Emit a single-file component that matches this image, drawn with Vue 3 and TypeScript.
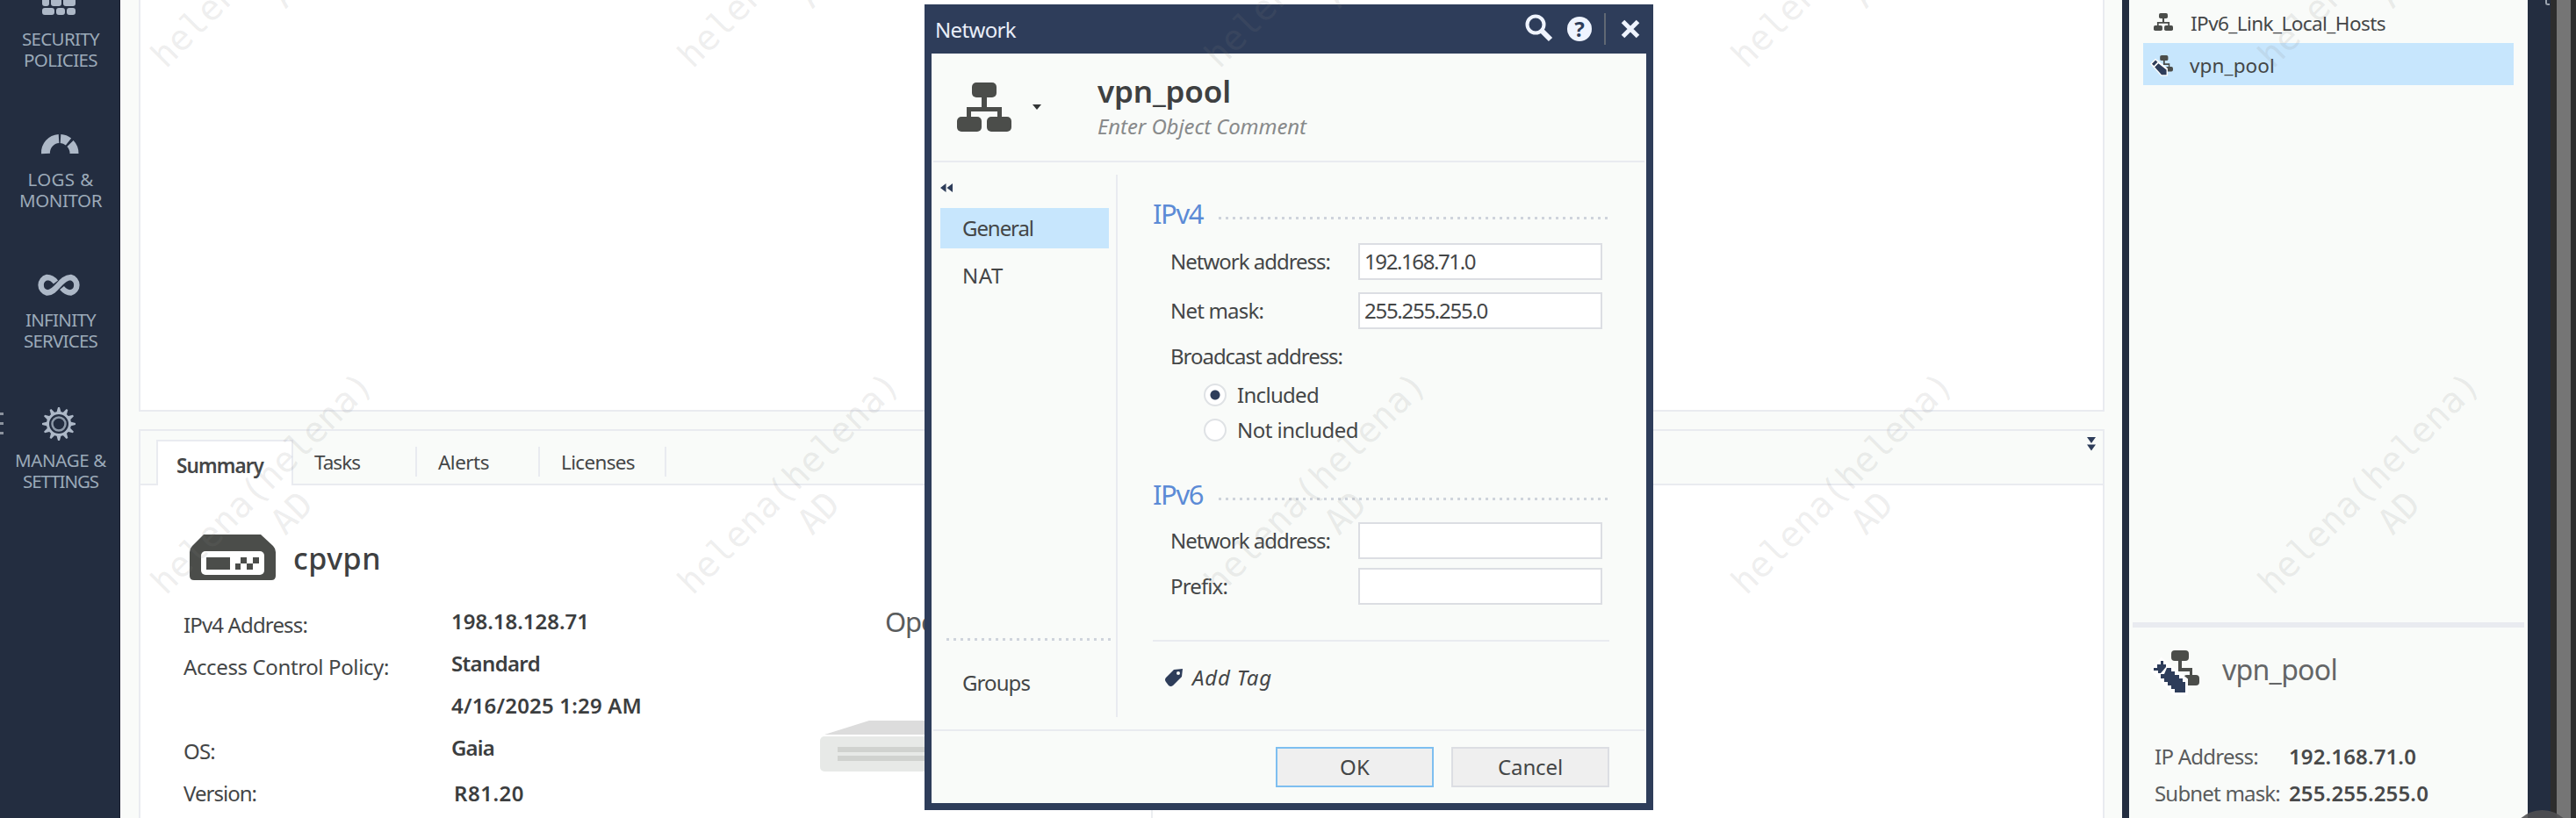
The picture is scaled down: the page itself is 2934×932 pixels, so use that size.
<script setup lang="ts">
import { reactive, ref } from 'vue'
import type { Directive } from 'vue'

interface NavItem { icon: string; lines: { text: string; width: number }[] }
interface Detail { label: string; labelWidth: number; value: string; valueWidth: number; aligned?: boolean }

// Spreads the letters of a label so that it takes up the given width in pixels.
const vFit: Directive<HTMLElement, number> = {
  mounted(el, binding) {
    const chars = (el.textContent ?? '').trim().length
    const natural = el.getBoundingClientRect().width
    if (chars > 0) el.style.letterSpacing = `${(binding.value - natural) / chars}px`
  },
}

const navItems: NavItem[] = [
  { icon: 'wall', lines: [{ text: 'SECURITY', width: 88 }, { text: 'POLICIES', width: 84 }] },
  { icon: 'gauge', lines: [{ text: 'LOGS &', width: 75 }, { text: 'MONITOR', width: 94 }] },
  { icon: 'infinity', lines: [{ text: 'INFINITY', width: 80 }, { text: 'SERVICES', width: 84 }] },
  { icon: 'gear', lines: [{ text: 'MANAGE &', width: 104 }, { text: 'SETTINGS', width: 86 }] },
]

const details: Detail[] = [
  { label: 'IPv4 Address:', labelWidth: 141, value: '198.18.128.71', valueWidth: 157 },
  { label: 'Access Control Policy:', labelWidth: 234, value: 'Standard', valueWidth: 101 },
  { label: '', labelWidth: 0, value: '4/16/2025 1:29 AM', valueWidth: 217 },
  { label: 'OS:', labelWidth: 36, value: 'Gaia', valueWidth: 49 },
  { label: 'Version:', labelWidth: 83, value: 'R81.20', valueWidth: 80, aligned: true },
]

const teeth = Array.from({ length: 12 }, (_, i) => i * 30)
const marks = [0, 1].flatMap((row) =>
  [0, 1, 2, 3, 4].map((col) => ({ x: 308 + col * 600, y: -40 + row * 600 })),
)

const form = reactive({ address4: '192.168.71.0', mask: '255.255.255.0', address6: '', prefix: '' })
const broadcast = ref<'in' | 'out'>('in')
</script>

<template>
  <div class="screen">
    <nav class="sidebar">
      <div v-for="item in navItems" :key="item.icon" class="nav-item">
        <svg v-if="item.icon === 'wall'" class="nav-icon" viewBox="0 0 48 40">
          <rect x="5" y="0" width="8" height="15" rx="3" /><rect x="15" y="0" width="12" height="15" rx="3" /><rect x="29" y="0" width="14" height="15" rx="3" />
          <rect x="5" y="17" width="14" height="8" rx="3" /><rect x="21" y="17" width="10" height="8" rx="3" /><rect x="33" y="17" width="10" height="8" rx="3" />
        </svg>
        <svg v-else-if="item.icon === 'gauge'" class="nav-icon" viewBox="0 0 48 40">
          <path d="M9 23 A16 16 0 0 1 24 6" class="arc" />
          <path d="M26 6 A16 16 0 0 1 35 9.500" class="arc" />
          <path d="M37 11.500 A16 16 0 0 1 41.500 23" class="arc" />
        </svg>
        <svg v-else-if="item.icon === 'infinity'" class="nav-icon" viewBox="0 0 48 40">
          <path d="M20.500 9.500 C17 5 13 4 10.500 4 A9 9 0 0 0 10.500 21.500 C21 22 26 4 37.500 4 A9 9 0 0 1 37.500 21.500 C34 21.500 30.500 19.500 27.500 16" class="loop" />
        </svg>
        <svg v-else class="nav-icon" viewBox="0 0 48 40">
          <g transform="translate(24 11)">
            <path v-for="a in teeth" :key="a" d="M-2.600 -13 L-1 -19 H1 L2.600 -13 Z" :transform="`rotate(${a})`" />
            <circle r="12.500" class="ring" /><circle r="7.500" class="ring thin" />
          </g>
        </svg>
        <div v-for="line in item.lines" :key="line.text" class="nav-line"><span v-fit="line.width">{{ line.text }}</span></div>
      </div>
      <div class="handle"><i></i><i></i><i></i></div>
    </nav>

    <main class="main">
      <section class="panel upper"></section>
      <section class="panel lower">
        <div class="tabs">
          <div class="tab active"><span v-fit="99">Summary</span></div>
          <div class="tab tasks"><span v-fit="52">Tasks</span></div>
          <div class="tab alerts"><span v-fit="58">Alerts</span></div>
          <div class="tab licenses"><span v-fit="84">Licenses</span></div>
          <svg class="fold" viewBox="0 0 12 16"><path d="M1 0 H11 L6 7 Z M1 8.500 H11 L6 15.500 Z" /></svg>
        </div>
        <div class="summary">
          <div class="facts">
            <div class="machine">
              <svg class="appliance" viewBox="0 0 98 52">
                <path d="M16 0 H81 L95 13 Q98 16 98 20 V47 Q98 52 93 52 H5 Q0 52 0 47 V20 Q0 16 3 13 Z" class="ink" />
                <rect x="13" y="19" width="72" height="27" rx="5" fill="#fff" />
                <path d="M19 26 H46 V40 H19 Z M58 26 H65 V33 H58 Z M72 26 H79 V33 H72 Z M52 33 H58 V40 H52 Z M65 33 H72 V40 H65 Z" class="ink" />
              </svg>
              <span v-fit="100" class="machine-name">cpvpn</span>
            </div>
            <div class="detail-grid">
              <template v-for="row in details" :key="row.value">
                <div class="label"><span v-if="row.label" v-fit="row.labelWidth">{{ row.label }}</span></div>
                <div class="value" :class="{ aligned: row.aligned }"><span v-fit="row.valueWidth">{{ row.value }}</span></div>
              </template>
            </div>
          </div>
          <div class="hardware">
            <span class="hardware-name">Open Server</span>
            <svg class="server" viewBox="0 0 300 58">
              <path d="M5 16 L56 0 H244 L295 16 Z" fill="#dcdcdc" />
              <rect y="18" width="300" height="40" rx="5" fill="#e7e9e7" />
              <path d="M20 30 H280 V36 H20 Z M20 40 H280 V46 H20 Z" fill="#d0d2cf" />
            </svg>
          </div>
        </div>
      </section>
    </main>

    <aside class="objects">
      <div class="object-list">
        <div class="object">
          <svg class="net-small" viewBox="0 0 62 56">
            <rect x="17" width="28" height="17" rx="5" /><rect y="39" width="28" height="17" rx="5" /><rect x="34" y="39" width="28" height="17" rx="5" />
            <path d="M28 16 H34 V28 H51 V40 H46 V33 H16 V40 H11 V28 H28 Z" />
          </svg>
          <span v-fit="222">IPv6_Link_Local_Hosts</span>
        </div>
        <div class="object selected">
          <svg class="edit-small" viewBox="0 0 58 52">
            <rect x="24" width="20" height="13" rx="4" class="ink" /><rect x="38" y="28" width="18" height="12" rx="4" class="ink" />
            <path d="M32 12 H36 V20 H48 V29 H45 V24 H32 Z" class="ink" />
            <path d="M13 12 L40 34 V48 H28 L4 21 Z" class="halo" />
            <path d="M13 12 L18 17 L9 26 L4 21 Z M20 20 L40 36 V48 H28 L11 29 Z" class="pencil" />
          </svg>
          <span v-fit="97">vpn_pool</span>
        </div>
      </div>
      <div class="preview">
        <div class="preview-head">
          <svg class="edit-large" viewBox="0 0 58 52">
            <rect x="24" width="20" height="12" rx="4" class="ink" /><rect x="38" y="28" width="18" height="12" rx="4" class="ink" />
            <path d="M32 12 H36 V20 H48 V29 H45 V24 H32 Z" class="ink" />
            <path d="M13 12 L40 34 V48 H28 L4 23 Z" class="halo" />
            <path d="M12 12 H15 V16 H18 V19 L12 26 H9 V23 H4 V20 H8 V16 H12 Z M19 20 H24 V24 H28 V28 H33 V32 H37 V36 H40 V48 H28 V44 H24 V40 H20 V36 H16 V32 H12 V27 H16 Z" class="pencil" />
          </svg>
          <span v-fit="131" class="preview-name">vpn_pool</span>
        </div>
        <div class="preview-row"><div class="key"><span v-fit="118">IP Address:</span></div><b v-fit="145">192.168.71.0</b></div>
        <div class="preview-row"><div class="key"><span v-fit="143">Subnet mask:</span></div><b v-fit="159">255.255.255.0</b></div>
      </div>
    </aside>
    <div class="edge"><i></i></div>
    <div class="scroll"></div>
    <div class="bubble"></div>

    <div class="dialog">
      <header class="title">
        <span v-fit="92">Network</span>
        <svg class="tool search" viewBox="0 0 32 34"><circle cx="12" cy="12" r="9.500" /><path d="M19 19 L29 29" /></svg>
        <div class="help">?</div>
        <div class="bar"></div>
        <svg class="tool close" viewBox="0 0 22 22"><path d="M2.500 2.500 L19.500 19.500 M19.500 2.500 L2.500 19.500" /></svg>
      </header>
      <div class="head">
        <svg class="net-large" viewBox="0 0 62 56">
          <rect x="17" width="28" height="17" rx="5" /><rect y="39" width="28" height="17" rx="5" /><rect x="34" y="39" width="28" height="17" rx="5" />
          <path d="M28 16 H34 V28 H51 V40 H46 V33 H16 V40 H11 V28 H28 Z" />
        </svg>
        <div class="caret"></div>
        <div class="naming">
          <div class="object-name"><span v-fit="152">vpn_pool</span></div>
          <div class="comment"><span v-fit="238">Enter Object Comment</span></div>
        </div>
      </div>
      <div class="body">
        <div class="pages">
          <svg class="collapse" viewBox="0 0 14 10"><path d="M6.500 0 V10 L0 5 Z M14 0 V10 L7.500 5 Z" /></svg>
          <div class="page current"><span v-fit="81">General</span></div>
          <div class="page nat"><span v-fit="47">NAT</span></div>
          <div class="dots groups-line"></div>
          <div class="page"><span v-fit="77">Groups</span></div>
        </div>
        <div class="form">
          <div class="heading"><span v-fit="57">IPv4</span><div class="dots"></div></div>
          <div class="field first"><label><span v-fit="182">Network address:</span></label><div class="input"><span v-fit="126">{{ form.address4 }}</span></div></div>
          <div class="field second"><label><span v-fit="106">Net mask:</span></label><div class="input"><span v-fit="140">{{ form.mask }}</span></div></div>
          <div class="caption"><span v-fit="196">Broadcast address:</span></div>
          <div class="radio" @click="broadcast = 'in'"><i :class="{ on: broadcast === 'in' }"></i><span v-fit="93">Included</span></div>
          <div class="radio" @click="broadcast = 'out'"><i :class="{ on: broadcast === 'out' }"></i><span v-fit="138">Not included</span></div>
          <div class="heading v6"><span v-fit="57">IPv6</span><div class="dots"></div></div>
          <div class="field third"><label><span v-fit="182">Network address:</span></label><div class="input">{{ form.address6 }}</div></div>
          <div class="field fourth"><label><span v-fit="65">Prefix:</span></label><div class="input">{{ form.prefix }}</div></div>
          <div class="rule"></div>
          <div class="tag">
            <svg viewBox="0 0 22 22"><path d="M21 1 L20 10 L10 20 Q7.500 22 5 20 L2 16 Q0 13.500 2 11 L11 2 Z" /><circle cx="16" cy="6" r="2" /></svg>
            <span v-fit="91">Add Tag</span>
          </div>
        </div>
      </div>
      <footer class="actions">
        <button class="ok"><span v-fit="34">OK</span></button>
        <button><span v-fit="74">Cancel</span></button>
      </footer>
    </div>

    <svg class="watermark" viewBox="0 0 2934 932">
      <g v-for="m in marks" :key="`${m.x}-${m.y}`" :transform="`translate(${m.x} ${m.y}) rotate(-45)`">
        <text text-anchor="middle">helena(helena)</text>
        <text y="48" text-anchor="middle">AD</text>
      </g>
    </svg>
  </div>
</template>

<style>
html, body { margin: 0; background: #f9fbf9; overflow: hidden; }
</style>

<style scoped>
.screen { position: relative; display: flex; width: 2934px; height: 932px; overflow: hidden; background: #f9fbf9; color: #444647; font: 24px "Noto Sans", "Open Sans", sans-serif; }
.screen * { box-sizing: border-box; }
span, b { display: inline-block; white-space: nowrap; }
svg { display: block; flex: none; overflow: visible; }
.ink { fill: #4b4d4a; }

.sidebar { position: relative; flex: none; width: 137px; background: #232d40; border-right: 1px solid #171c2c; overflow: hidden; }
.nav-item { height: 160px; padding-left: 2px; color: #9caab9; font-size: 20.500px; line-height: 24px; text-align: center; }
.nav-item:first-child { margin-top: -8px; }
.nav-icon { width: 48px; height: 40px; margin: 0 0 1px 41px; fill: #adb8c7; }
.nav-line:nth-of-type(1) { margin-top: -1px; }
.nav-icon .arc { fill: none; stroke: #adb8c7; stroke-width: 10; }
.nav-icon .loop { fill: none; stroke: #adb8c7; stroke-width: 6.500; }
.nav-icon .ring { fill: none; stroke: #adb8c7; stroke-width: 3; }
.nav-icon .thin { stroke: #8d99a8; stroke-width: 2.500; }
.handle { position: absolute; left: 0; top: 470px; display: flex; flex-direction: column; gap: 8px; }
.handle i { width: 4px; height: 3px; background: #8b929d; }

.main { flex: none; display: flex; flex-direction: column; gap: 20px; width: 2280px; padding: 0 20px; border-left: 1px solid #fff; }
.panel { flex: none; border: 2px solid #e9ebf0; background: #fff; }
.upper { height: 469px; border-top: 0; }
.lower { height: 460px; }
.tabs { display: flex; height: 62px; border-bottom: 2px solid #e9ebf0; background: #f9fbf9; font-size: 22.500px; line-height: 30px; }
.tab { height: 34px; margin-top: 18px; padding-top: 3px; border-right: 2px solid #e9ebf0; }
.tab.active { width: 156px; height: 52px; margin: 10px 0 0 18px; padding: 13px 0 0 21px; border: 2px solid #e9ebf0; border-bottom: 0; background: #fff; font-weight: 600; }
.tasks { width: 141px; padding-left: 24px; }
.alerts { width: 140px; padding-left: 24px; }
.licenses { width: 144px; padding-left: 24px; }
.fold { width: 12px; height: 16px; margin: 7px 7px 0 auto; fill: #2e3d5a; }
.summary { display: flex; height: 395px; }
.facts { flex: none; width: 774px; }
.machine { display: flex; height: 108px; padding: 56px 0 0 56px; }
.appliance { width: 98px; height: 52px; margin-right: 20px; }
.machine-name { margin-top: 7px; font-size: 34px; line-height: 40px; color: #3e4041; font-weight: 500; }
.detail-grid { display: grid; grid-template-columns: 305px 1fr; grid-auto-rows: 48px; margin: 27px 0 0 49px; font-size: 24px; line-height: 48px; }
.value { margin-top: -4px; color: #3c3e3f; font-weight: 600; }
.value.aligned { margin-top: 0; padding-left: 3px; }
.hardware { flex: none; width: 379px; padding-top: 135px; border-right: 2px solid #eceef1; }
.hardware-name { margin-left: 74px; font-size: 31px; line-height: 40px; color: #5a5c5d; letter-spacing: -1.200px; }
.server { width: 300px; height: 58px; margin-top: 93px; }

.objects { flex: none; display: flex; flex-direction: column; width: 462px; border-left: 8px solid #232d40; background: #f9fbf9; }
.object-list { height: 708px; padding: 1px 16px 0; font-size: 22.500px; line-height: 48px; }
.object { display: flex; height: 48px; padding-top: 2px; }
.object.selected { background: #c7e6fd; }
.net-small { width: 22px; height: 20px; margin: 12px 20px 0 12px; fill: #4b4d4a; }
.edit-small { width: 27px; height: 24px; margin: 12px 18px 0 8px; }
.halo { fill: #fff; stroke: #fff; stroke-width: 6; }
.pencil { fill: #2e3d5a; }
.preview { margin: 1px 4px 0; border-top: 6px solid #e9ebf0; }
.preview-head { display: flex; height: 126px; padding: 26px 0 0 20px; }
.edit-large { width: 58px; height: 52px; }
.preview-name { margin: 2px 0 0 24px; font-size: 32px; line-height: 40px; color: #646667; }
.preview-row { display: flex; padding-left: 25px; line-height: 42px; color: #5a5c5d; }
.preview-row .key { width: 153px; }
.preview-row b { color: #48494a; font-weight: 600; }
.edge { flex: none; width: 26px; background: #232d40; }
.edge i { display: block; width: 5px; height: 6px; margin-left: 20px; border: solid #9ba3ae; border-width: 0 0 2px 2px; border-radius: 0 0 0 3px; }
.scroll { flex: none; width: 29px; background: #757575; border: solid #2d2d2d; border-width: 0 6px 0 7px; }
.bubble { position: absolute; left: 2859px; top: 923px; width: 73px; height: 73px; border-radius: 50%; background: rgba(80, 80, 82, .9); }

.dialog { position: absolute; left: 1053px; top: 5px; display: flex; flex-direction: column; width: 830px; height: 918px; border: solid #2e3d5a; border-width: 0 8px 8px; background: #f9fbf9; }
.title { flex: none; display: flex; height: 56px; padding-left: 4px; background: #2e3d5a; color: #e9eef8; line-height: 58px; }
.tool { fill: none; stroke: #eff4ff; }
.search { width: 32px; height: 34px; margin: 11px 16px 0 auto; stroke-width: 4; }
.search path { stroke-width: 6; }
.help { width: 28px; height: 28px; margin-top: 14px; border-radius: 50%; background: #eff4ff; color: #2e3d5a; font-size: 24px; font-weight: 700; line-height: 28px; text-align: center; }
.bar { width: 2px; height: 36px; margin: 10px 17px 0 14px; background: #606873; }
.close { width: 22px; height: 22px; margin: 17px 7px 0 0; stroke-width: 5; }
.head { flex: none; display: flex; height: 124px; margin: 0 2px; padding-left: 27px; border-bottom: 2px solid #e9ebf0; }
.net-large { width: 62px; height: 56px; margin-top: 33px; fill: #4b4d4a; }
.caret { width: 0; height: 0; margin: 58px 64px 0 24px; border: 5px solid transparent; border-top: 6px solid #333536; border-bottom: 0; }
.naming { padding-top: 23px; }
.object-name { height: 40px; font-size: 35px; line-height: 40px; font-weight: 600; color: #3e4041; }
.comment { height: 36px; margin-top: 2px; font-size: 24px; line-height: 36px; font-style: italic; color: #888a8b; }
.body { flex: 1; display: flex; }
.pages { display: flex; flex-direction: column; width: 212px; margin: 14px 0; padding: 10px 0 16px 10px; border-right: 2px solid #e9ebf0; }
.collapse { width: 14px; height: 10px; margin-bottom: 18px; fill: #2e3d5a; }
.page { width: 192px; height: 46px; padding-left: 25px; line-height: 46px; }
.page.current { background: #c7e6fd; }
.nat { margin-top: 8px; }
.dots { height: 3px; background: repeating-linear-gradient(90deg, #cfd4dc 0 3px, transparent 3px 8px); }
.groups-line { width: 188px; margin: auto 0 25px 7px; }
.form { padding: 38px 0 0 40px; }
.heading { display: grid; grid-template-columns: 75px 445px; align-items: center; height: 40px; font-size: 31px; line-height: 40px; color: #5c8bd6; }
.heading span { justify-self: start; }
.heading .dots { margin-top: 10px; }
.field { display: flex; height: 42px; line-height: 42px; }
.field label { width: 234px; padding-left: 20px; }
.input { width: 278px; height: 42px; padding-left: 5px; border: 2px solid #dcdee3; background: #fff; line-height: 38px; }
.first, .second { margin-top: 14px; }
.third { margin-top: 12px; }
.fourth { margin-top: 10px; }
.caption { height: 40px; margin: 11px 0 4px 20px; line-height: 40px; }
.radio { display: flex; align-items: center; height: 40px; padding-left: 58px; line-height: 40px; }
.radio i { width: 26px; height: 26px; margin-right: 12px; border: 2px solid #dfe2e5; border-radius: 50%; background: #fff; }
.radio i.on { background: radial-gradient(circle, #2e3d5a 0 5px, #fff 6px); }
.v6 { margin-top: 33px; }
.rule { width: 520px; height: 2px; margin-top: 40px; background: #e9ebf0; }
.tag { display: flex; height: 40px; margin: 21px 0 0 13px; line-height: 40px; font-style: italic; }
.tag svg { width: 22px; height: 22px; margin: 9px 10px 0 0; fill: #2e3d5a; }
.tag circle { fill: #f9fbf9; }
.actions { flex: none; display: flex; justify-content: flex-end; gap: 20px; height: 84px; margin: 0 2px; padding: 18px 40px 0 0; border-top: 2px solid #e9ebf0; }
button { width: 180px; height: 46px; padding: 0; border: 2px solid #dcdee3; background: #efefef; color: inherit; font: inherit; line-height: 42px; }
.ok { border-color: #7ebff0; }
.watermark { position: absolute; inset: 0; width: 2934px; height: 932px; pointer-events: none; }
.watermark text { font: 40px "DejaVu Sans Mono", monospace; fill: rgba(128, 128, 128, .14); }
</style>
